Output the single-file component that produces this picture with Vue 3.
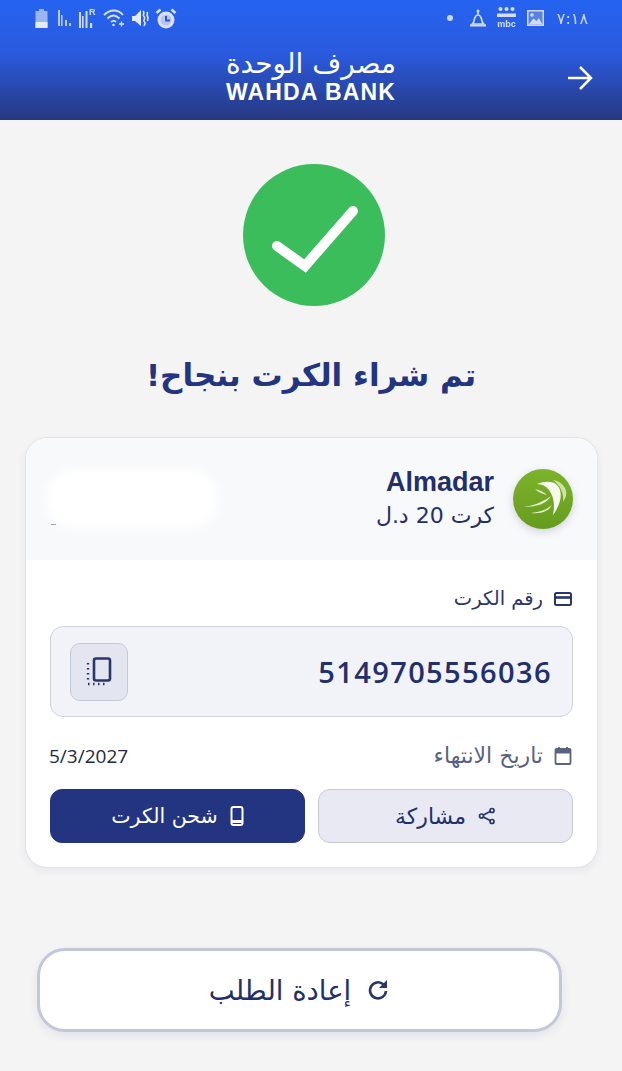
<template>
  <div class="page" dir="rtl">
    <header class="topbar">
      <div class="statusbar" dir="ltr">
        <div class="status-left">
          <svg width="13" height="19" viewBox="0 0 13 19"><path d="M4 0h5v2h3.500v17H.500V2H4z" fill="#c6d3f2" opacity=".8"/><rect x=".5" y="13" width="12" height="6" fill="#f3f6fd"/></svg>
          <svg width="19" height="18" viewBox="0 0 19 18" fill="#c6d3f2"><rect x="4" y="1" width="2" height="16"/><rect x="7" y="6" width="1.600" height="11"/><rect x="11" y="11" width="2" height="6"/><rect x="15" y="14" width="2" height="3"/></svg>
          <svg width="18" height="22" viewBox="0 0 18 22" fill="#dfe6f9"><rect x="0" y="5" width="2" height="16"/><rect x="3" y="9" width="1.600" height="12"/><rect x="6.500" y="4" width="2" height="17"/><rect x="11" y="16" width="2.200" height="5"/><text x="10" y="8" class="mini-r">R</text></svg>
          <svg width="23" height="18" viewBox="0 0 23 18" fill="none" stroke="#e6ebfa" stroke-width="1.800"><path d="M1 6c6-6 14-6 19 0"/><path d="M4.500 9.500c4-4 8-4 12 0"/><path d="M8 13c2-1.500 3.500-1.500 5 0"/><circle cx="10.500" cy="16" r="1.200" fill="#fff" stroke="none"/><path d="M16 15h5M18.500 12.500v5" stroke-width="1.400"/></svg>
          <svg width="17" height="19" viewBox="0 0 17 19"><path d="M0 7h3l6-6v16l-6-5H0z" fill="#f2f5fd"/><path d="M11 2c2.500 2-1 3.500 1 5.500s-1.500 3.500 .5 5.500-1 2.500 0 4M15 3c1.500 2-1 3 .5 4.500s-1 3 .5 4.500" fill="none" stroke="#f2f5fd" stroke-width="1.600"/></svg>
          <svg width="22" height="21" viewBox="0 0 22 21"><circle cx="11" cy="12" r="8.500" fill="#e8edfb"/><circle cx="11" cy="12" r="5.500" fill="#c3cff0"/><path d="M11 8v4.500h4" fill="none" stroke="#2f55c8" stroke-width="2"/><path d="M1.500 5l4-3.500M20.500 5l-4-3.500" stroke="#e8edfb" stroke-width="2.400"/></svg>
        </div>
        <div class="status-right">
          <span class="dot"></span>
          <svg class="bell" width="16" height="18" viewBox="0 0 16 18" fill="none" stroke="#e3e9fa" stroke-width="1.700"><circle cx="8" cy="2" r="1.500" fill="#e3e9fa" stroke="none"/><path d="M8 3v2"/><path d="M2.500 15c2.500-2 1-9 5.500-9s3 7 5.500 9z"/><path d="M0 16.500h16" stroke-width="2"/></svg>
          <svg width="19" height="22" viewBox="0 0 19 22" fill="#e3e9fa"><circle cx="3.500" cy="2" r="2"/><circle cx="9.500" cy="2" r="2"/><circle cx="15.500" cy="2" r="2"/><rect x="0" y="6.500" width="19" height="3.500"/><text x="9.500" y="20" class="mini-mbc">mbc</text></svg>
          <svg width="17" height="16" viewBox="0 0 17 16"><rect width="17" height="16" fill="#dfe6f9"/><rect x="1.500" y="1.500" width="14" height="13" fill="#5f83e0"/><circle cx="5" cy="5" r="1.800" fill="#dfe6f9"/><path d="M1.500 14.500l5-6 3 2.500 2.500-3 3.500 6.500z" fill="#dfe6f9"/></svg>
          <span class="clock">٧:١٨</span>
        </div>
      </div>
      <div class="brandbar">
        <span class="back-spacer"></span>
        <div class="brand">
          <div class="brand-ar">مصرف الوحدة</div>
          <div class="brand-en">WAHDA BANK</div>
        </div>
        <svg class="back" width="28" height="28" viewBox="0 0 28 28" fill="none" stroke="#fff" stroke-width="2.500"><path d="M2 14h23M14 3l11 11-11 11"/></svg>
      </div>
    </header>

    <main class="content">
      <div class="success-circle">
        <svg width="94" height="76" viewBox="0 0 94 76" fill="none" stroke="#fff" stroke-width="10" stroke-linecap="round"><path d="M10 49l28 20 48-55"/></svg>
      </div>
      <h1>تم شراء الكرت بنجاح!</h1>

      <section class="card">
        <div class="card-head">
          <div class="provider">
            <div class="provider-logo">
              <svg width="60" height="60" viewBox="0 0 60 60">
                <defs>
                  <linearGradient id="logoGreen" x1="0" y1="0" x2="0" y2="1">
                    <stop offset="0" stop-color="#7db32a"/>
                    <stop offset="1" stop-color="#669c1e"/>
                  </linearGradient>
                </defs>
                <circle cx="30" cy="30" r="30" fill="url(#logoGreen)"/>
                <path d="M24 15c8-3 16-3 20 1 6 6 5 18-4 30 2-10 1-18-4-25-3-4-7-6-12-6z" fill="#f6f9ee"/>
                <path d="M9 38c11-1 21-5 29-11-4 7-12 11-29 11zM18 44c9-1 15-3 21-8-3 6-10 9-21 8zM22 20c5 1 9 3 12 6-5-1-9-3-12-6z" fill="#e2efca"/>
                <path d="M40 11c6 1 12 5 13 11 1 4-1 8-3 11 1-8-2-16-10-22z" fill="#cfe3a6"/>
              </svg>
            </div>
            <div class="provider-text">
              <div class="provider-name" dir="ltr">Almadar</div>
              <div class="provider-sub">كرت 20 د.ل</div>
            </div>
          </div>
          <div class="blur-wrap">
            <div class="blur-patch"></div>
            <span class="dash"></span>
          </div>
        </div>

        <div class="card-body">
          <div class="label">
            <svg width="18" height="14" viewBox="0 0 18 14" fill="none" stroke="#2b3569" stroke-width="2"><rect x="1" y="1" width="16" height="12" rx="1.500"/><path d="M1 5.500h16" stroke-width="2.600"/></svg>
            <span>رقم الكرت</span>
          </div>
          <div class="number-box">
            <span class="number" dir="ltr">5149705556036</span>
            <button class="copy-btn">
              <svg width="26" height="30" viewBox="0 0 26 30" fill="none" stroke="#2b3569" stroke-width="2.600"><rect x="8" y="1.500" width="16" height="22" rx="2"/><path d="M2 6v1.500M2 11v1.500M2 16v1.500M2 21v1.500M2 27h1.500M7 27h1.500M12 27h1.500M17 27h1.500" stroke-width="2.400"/></svg>
            </button>
          </div>
          <div class="expiry">
            <div class="label label-muted">
              <svg width="18" height="20" viewBox="0 0 18 20" fill="none" stroke="#5a6282" stroke-width="1.800"><rect x="1.500" y="3" width="15" height="15" rx="1"/><path d="M1.500 5.500h15" stroke-width="4"/><path d="M5 1v2M13 1v2"/></svg>
              <span class="expiry-text">تاريخ الانتهاء</span>
            </div>
            <span class="date" dir="ltr">5/3/2027</span>
          </div>
          <div class="actions">
            <button class="btn btn-share">
              <svg width="18" height="18" viewBox="0 0 18 18" fill="none" stroke="#2b3569" stroke-width="1.700"><circle cx="14" cy="3.500" r="2"/><circle cx="3.500" cy="9" r="2"/><circle cx="14" cy="14.500" r="2"/><path d="M5.300 8l6.900-3.500M5.300 10l6.900 3.500"/></svg>
              <span>مشاركة</span>
            </button>
            <button class="btn btn-charge">
              <svg width="14" height="20" viewBox="0 0 14 20" fill="none" stroke="#fff" stroke-width="2"><rect x="1.500" y="1" width="11" height="18" rx="2"/><path d="M1.500 15.500h11" stroke-width="3"/></svg>
              <span>شحن الكرت</span>
            </button>
          </div>
        </div>
      </section>

      <button class="retry">
        <svg width="22" height="22" viewBox="0 0 22 22" fill="none" stroke="#2b3569" stroke-width="2.600"><path d="M19 12a8 8 0 1 1-2.500-6.500"/><path d="M20 1v8h-8z" fill="#2b3569" stroke="none"/></svg>
        <span>إعادة الطلب</span>
      </button>
    </main>
  </div>
</template>

<script setup>
</script>

<style>
html, body {
  background: #f4f4f5;
}
</style>

<style scoped>
.page {
  width: 622px;
  height: 1071px;
  overflow: hidden;
  background: #f4f4f5;
  font-family: "DejaVu Sans", "Noto Sans", sans-serif;
  color: #232f6b;
}

.topbar {
  height: 120px;
  background: linear-gradient(180deg, #2563f0 0%, #2a5ade 45%, #27387f 100%);
}

.statusbar {
  height: 36px;
  display: flex;
  justify-content: space-between;
  align-items: center;
  padding: 0 34px 0 35px;
}

.status-left,
.status-right {
  display: flex;
  align-items: center;
  gap: 6px;
  opacity: 0.92;
  filter: blur(0.4px);
}

.status-right {
  gap: 11px;
}

.dot {
  width: 6px;
  height: 6px;
  border-radius: 50%;
  background: #d9e2fa;
}

.bell {
  margin-left: 6px;
}

.clock {
  margin-left: 2px;
  color: #d9e2fa;
  font-size: 16px;
}

.mini-r {
  font: 700 9px "Liberation Sans", sans-serif;
  fill: #e3e9fa;
}

.mini-mbc {
  font: 700 9px "Liberation Sans", sans-serif;
  fill: #e3e9fa;
  text-anchor: middle;
}

.brandbar {
  height: 84px;
  display: flex;
  justify-content: space-between;
  align-items: center;
  padding: 0 28px;
  direction: ltr;
}

.back-spacer {
  width: 28px;
}

.brand {
  color: #fff;
  text-align: center;
  margin-top: -5px;
}

.brand-ar {
  font-size: 28px;
  line-height: 33px;
  direction: rtl;
}

.brand-en {
  font-family: "Liberation Sans", sans-serif;
  font-size: 23px;
  font-weight: 700;
  line-height: 24px;
  letter-spacing: 1.100px;
}

.content {
  display: flex;
  flex-direction: column;
  align-items: center;
}

.success-circle {
  width: 142px;
  height: 142px;
  margin-top: 44px;
  margin-left: 6px;
  border-radius: 50%;
  background: #3bbd5c;
  display: flex;
  align-items: center;
  justify-content: center;
}

h1 {
  margin: 46px 0 39px;
  font-size: 31px;
  line-height: 46px;
  font-weight: 700;
  color: #233580;
}

.card {
  width: 573px;
  margin-left: 1px;
  background: #fff;
  border: 1px solid #e1e3ea;
  border-radius: 22px;
  overflow: hidden;
  box-shadow: 0 3px 8px rgba(30, 40, 90, 0.06);
  box-sizing: border-box;
}

.card-head {
  height: 122px;
  background: #f8f9fb;
  display: flex;
  justify-content: space-between;
  align-items: center;
  padding: 0 24px 0 20px;
}

.provider {
  display: flex;
  align-items: center;
  gap: 19px;
}

.provider-logo {
  width: 60px;
  height: 60px;
  filter: drop-shadow(0 3px 4px rgba(30, 40, 90, 0.18));
}

.provider-name {
  font-family: "Liberation Sans", sans-serif;
  font-size: 27px;
  font-weight: 700;
  line-height: 34px;
  text-align: right;
}

.provider-sub {
  font-size: 22px;
  line-height: 34px;
  color: #232f6b;
}

.blur-wrap {
  position: relative;
}

.blur-patch {
  width: 172px;
  height: 58px;
  background: #fff;
  border-radius: 26px;
  filter: blur(6px);
}

.dash {
  position: absolute;
  left: 5px;
  bottom: 3px;
  width: 5px;
  height: 1px;
  background: #9aa0ad;
}

.card-body {
  padding: 24px;
}

.label {
  display: flex;
  align-items: center;
  gap: 11px;
  padding-right: 1px;
  font-size: 19.500px;
  line-height: 30px;
  color: #2b3569;
}

.label-muted {
  color: #5a6282;
}

.expiry-text {
  font-size: 22px;
}

.number-box {
  height: 89px;
  margin-top: 12px;
  display: flex;
  justify-content: space-between;
  align-items: center;
  padding: 0 20px 0 19px;
  background: #f1f3f8;
  border: 1px solid #cfd3df;
  border-radius: 13px;
}

.number {
  font-family: "Open Sans", sans-serif;
  font-size: 29px;
  font-weight: 600;
  letter-spacing: 1.400px;
  color: #232f6b;
}

.copy-btn {
  width: 58px;
  height: 58px;
  padding: 0;
  display: flex;
  align-items: center;
  justify-content: center;
  background: #e3e6f0;
  border: 1px solid #c4c9d8;
  border-radius: 10px;
}

.expiry {
  margin-top: 24px;
  display: flex;
  justify-content: space-between;
  align-items: center;
}

.date {
  font-family: "Open Sans", sans-serif;
  font-size: 19px;
  font-weight: 500;
  color: #1f2742;
  margin-left: -1px;
}

.actions {
  margin-top: 18px;
  display: grid;
  grid-template-columns: 1fr 1fr;
  gap: 13px;
}

.btn {
  height: 54px;
  display: flex;
  align-items: center;
  justify-content: center;
  gap: 12px;
  font-family: inherit;
  border-radius: 12px;
}

.btn-share {
  font-size: 22px;
  background: #e8e9f2;
  border: 1px solid #c6c9d6;
  color: #232f6b;
}

.btn-charge {
  font-size: 20.500px;
  background: #233480;
  border: 1px solid #233480;
  color: #fff;
}

.retry {
  width: 525px;
  height: 84px;
  margin-top: 80px;
  margin-right: 24px;
  display: flex;
  align-items: center;
  justify-content: center;
  gap: 16px;
  background: #fff;
  border: 3px solid #c3c7d8;
  border-radius: 28px;
  font-family: inherit;
  font-size: 27.500px;
  color: #232f6b;
  box-shadow: 0 4px 10px rgba(30, 40, 90, 0.08);
}
</style>
